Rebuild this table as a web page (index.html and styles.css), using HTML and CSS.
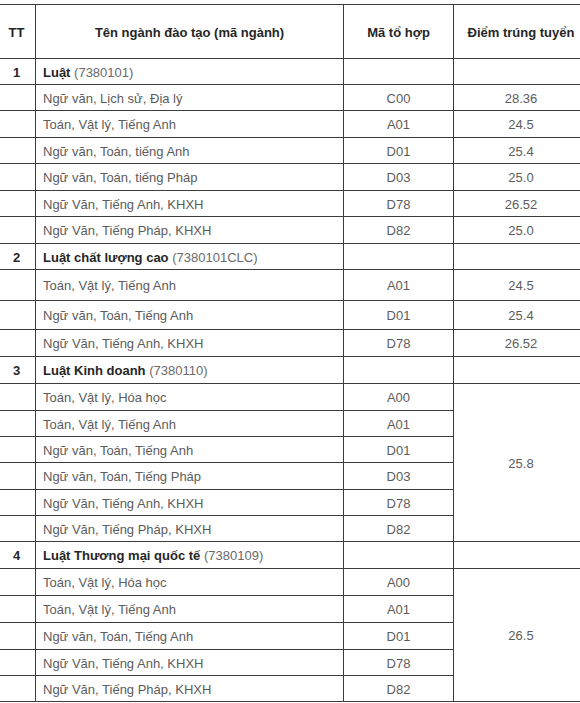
FILE: index.html
```html
<!DOCTYPE html>
<html lang="vi">
<head>
<meta charset="utf-8">
<title>Điểm trúng tuyển</title>
<link rel="stylesheet" href="styles.css">
</head>
<body>
<div class="page">
<table class="scores">
  <colgroup>
    <col class="c-tt"><col class="c-name"><col class="c-code"><col class="c-score">
  </colgroup>
  <thead>
    <tr class="h54">
      <th>TT</th>
      <th>Tên ngành đào tạo (mã ngành)</th>
      <th>Mã tổ hợp</th>
      <th>Điểm trúng tuyển</th>
    </tr>
  </thead>
  <tbody>
    <tr class="h26 sec"><td class="tt">1</td><td class="name"><b>Luật</b> <span>(7380101)</span></td><td></td><td></td></tr>
    <tr class="h26"><td></td><td class="name">Ngữ văn, Lịch sử, Địa lý</td><td>C00</td><td>28.36</td></tr>
    <tr class="h27"><td></td><td class="name">Toán, Vật lý, Tiếng Anh</td><td>A01</td><td>24.5</td></tr>
    <tr class="h26"><td></td><td class="name">Ngữ văn, Toán, tiếng Anh</td><td>D01</td><td>25.4</td></tr>
    <tr class="h27"><td></td><td class="name">Ngữ văn, Toán, tiếng Pháp</td><td>D03</td><td>25.0</td></tr>
    <tr class="h26"><td></td><td class="name">Ngữ Văn, Tiếng Anh, KHXH</td><td>D78</td><td>26.52</td></tr>
    <tr class="h27"><td></td><td class="name">Ngữ Văn, Tiếng Pháp, KHXH</td><td>D82</td><td>25.0</td></tr>

    <tr class="h26 sec"><td class="tt">2</td><td class="name"><b>Luật chất lượng cao</b> <span>(7380101CLC)</span></td><td></td><td></td></tr>
    <tr class="h31"><td></td><td class="name">Toán, Vật lý, Tiếng Anh</td><td>A01</td><td>24.5</td></tr>
    <tr class="h29"><td></td><td class="name">Ngữ văn, Toán, Tiếng Anh</td><td>D01</td><td>25.4</td></tr>
    <tr class="h27"><td></td><td class="name">Ngữ Văn, Tiếng Anh, KHXH</td><td>D78</td><td>26.52</td></tr>

    <tr class="h27 sec"><td class="tt">3</td><td class="name"><b>Luật Kinh doanh</b> <span>(7380110)</span></td><td></td><td></td></tr>
    <tr class="h27"><td></td><td class="name">Toán, Vật lý, Hóa học</td><td>A00</td><td rowspan="6">25.8</td></tr>
    <tr class="h26"><td></td><td class="name">Toán, Vật lý, Tiếng Anh</td><td>A01</td></tr>
    <tr class="h26"><td></td><td class="name">Ngữ văn, Toán, Tiếng Anh</td><td>D01</td></tr>
    <tr class="h27"><td></td><td class="name">Ngữ văn, Toán, Tiếng Pháp</td><td>D03</td></tr>
    <tr class="h26"><td></td><td class="name">Ngữ Văn, Tiếng Anh, KHXH</td><td>D78</td></tr>
    <tr class="h26"><td></td><td class="name">Ngữ Văn, Tiếng Pháp, KHXH</td><td>D82</td></tr>

    <tr class="h27 sec"><td class="tt">4</td><td class="name"><b>Luật Thương mại quốc tế</b> <span>(7380109)</span></td><td></td><td></td></tr>
    <tr class="h27"><td></td><td class="name">Toán, Vật lý, Hóa học</td><td>A00</td><td rowspan="5">26.5</td></tr>
    <tr class="h27"><td></td><td class="name">Toán, Vật lý, Tiếng Anh</td><td>A01</td></tr>
    <tr class="h27"><td></td><td class="name">Ngữ văn, Toán, Tiếng Anh</td><td>D01</td></tr>
    <tr class="h26"><td></td><td class="name">Ngữ Văn, Tiếng Anh, KHXH</td><td>D78</td></tr>
    <tr class="h26"><td></td><td class="name">Ngữ Văn, Tiếng Pháp, KHXH</td><td>D82</td></tr>
  </tbody>
</table>
</div>
</body>
</html>
```

FILE: styles.css
```css
html, body {
  margin: 0;
  padding: 0;
  background: #ffffff;
}
.page {
  width: 580px;
  height: 703px;
  overflow: hidden;
  padding-top: 4px;
  box-sizing: border-box;
}
.scores {
  border-collapse: collapse;
  table-layout: fixed;
  width: 591px;
  margin-left: -3px;
  font-family: "Liberation Sans", Arial, sans-serif;
  font-size: 13px;
  color: #5c5c5c;
}
.c-tt { width: 38px; }
.c-name { width: 308px; }
.c-code { width: 110px; }
.c-score { width: 135px; }

.scores th,
.scores td {
  border: 1px solid #3c3c3c;
  padding: 1px 0 0 0;
  text-align: center;
  vertical-align: middle;
  box-sizing: border-box;
}
.scores th {
  font-weight: bold;
  color: #262626;
}
.scores td.name {
  text-align: left;
  padding-left: 7px;
}
.scores td.tt {
  font-weight: bold;
  color: #262626;
}
.scores td.name b {
  color: #262626;
}
.scores td.name span {
  color: #6a6a6a;
}
.h54 { height: 54px; }
.h26 { height: 26px; }
.h27 { height: 27px; }
.h29 { height: 29px; }
.h31 { height: 31px; }
```
